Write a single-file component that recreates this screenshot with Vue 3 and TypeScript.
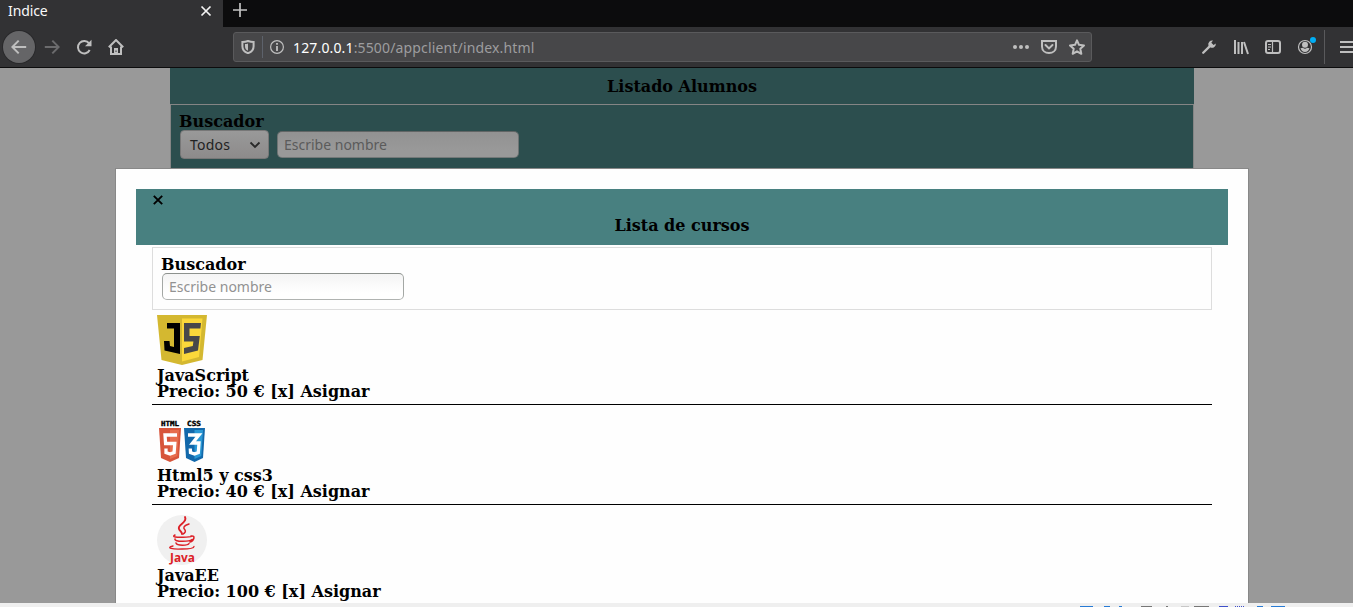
<script setup lang="ts">
import { ref } from 'vue'

interface Course {
  name: string
  price: number
  logo: 'js' | 'html' | 'java'
}

const courses: Course[] = [
  { name: 'JavaScript', price: 50, logo: 'js' },
  { name: 'Html5 y css3', price: 40, logo: 'html' },
  { name: 'JavaEE', price: 100, logo: 'java' },
]
const studentQuery = ref('')
const courseQuery = ref('')
</script>

<template>
  <div class="window">
    <header class="tabs">
      <div class="tab">
        <span class="tab-title">Indice</span>
        <svg class="tab-close" width="12" height="12" viewBox="0 0 12 12"><path d="M1.5 1.5 10.5 10.5M10.5 1.5 1.5 10.5" stroke="#f4f4f4" stroke-width="1.7" /></svg>
      </div>
      <svg class="tab-new" width="14" height="14" viewBox="0 0 14 14"><path d="M7 0V14M0 7H14" stroke="#c4c4c4" stroke-width="1.7" /></svg>
    </header>

    <nav class="toolbar">
      <span class="back">
        <svg width="16" height="16" viewBox="0 0 16 16"><path d="M15.2 8H1.4M7.7 1.6 1.3 8l6.4 6.4" class="line" /></svg>
      </span>
      <svg class="forward" width="16" height="16" viewBox="0 0 16 16"><path d="M.8 8h13.8M8.3 1.6 14.7 8l-6.4 6.4" class="line dim" /></svg>
      <svg class="reload" width="16" height="16" viewBox="0 0 16 16"><path d="M13.1 4.4A6.2 6.2 0 1 0 13.7 11" class="line" /><path d="M15.5.8v6.5H9z" class="fill" /></svg>
      <svg class="home" width="16" height="16" viewBox="0 0 16 16"><path d="M.8 8.2 8 1l7.2 7.2M3 7.5V15h10V7.5" class="line" /><path d="M6 9h4v6H6z" class="fill" /><path d="M7.5 11.5h1V13h-1z" fill="#323234" /></svg>

      <div class="address">
        <svg class="shield" width="14" height="14" viewBox="0 0 14 14"><path d="M7 1C4.7 1.8 3 2 1.4 2v4.2C1.4 10 3.4 12 7 13.2 10.6 12 12.6 10 12.6 6.2V2C11 2 9.300 1.800 7 1z" class="line" /><path d="M7 3.4v7.4C4.9 9.8 4 8.500 4 6.2V4c1.100 0 2.100-.2 3-.6z" class="fill" /></svg>
        <span class="divider" />
        <svg class="info" width="14" height="14" viewBox="0 0 14 14"><circle cx="7" cy="7" r="6.4" class="line thin" /><path d="M6.100 3h1.800v1.700H6.100zM6.100 6h1.800v5H6.100z" class="fill" /></svg>
        <span class="url"><b>127.0.0.1</b>:5500/appclient/index.html</span>
        <svg class="dots" width="16" height="16" viewBox="0 0 16 16"><circle cx="2" cy="8" r="2" class="fill" /><circle cx="8" cy="8" r="2" class="fill" /><circle cx="14" cy="8" r="2" class="fill" /></svg>
        <svg class="pocket" width="16" height="16" viewBox="0 0 16 16"><path d="M1 2h14v5.500C15 11.700 11.800 14 8 14S1 11.700 1 7.500z" class="line" /><path d="m4.500 6 3.500 3.400L11.500 6" class="line" stroke-linecap="round" /></svg>
        <svg class="star" width="16" height="16" viewBox="0 0 16 16"><path d="m8 1.300 2 4.500 5 .6-3.700 3.400 1 5L8 12.300l-4.300 2.500 1-5L1 6.400l5-.6z" class="line" stroke-linejoin="round" /></svg>
      </div>

      <svg class="wrench" width="16" height="16" viewBox="0 0 16 16"><path d="m2.200 13.800 7.200-7.200" stroke="#bfbfbf" stroke-width="2.300" stroke-linecap="round" /><path d="M14.800 4.500 12.600 6 10.300 3.800 12 1.500A3.900 3.900 0 0 0 7.400 6.400l2.200 2.200A3.900 3.900 0 0 0 14.800 4.500z" class="fill" /></svg>
      <svg class="library" width="16" height="16" viewBox="0 0 16 16"><path d="M2 1v14M5.500 3v12M9 3v12M11 3l4 12" class="line" /></svg>
      <svg class="sidebar" width="16" height="16" viewBox="0 0 16 16"><rect x="1" y="2" width="14" height="12" rx="2" class="line" /><path d="M7.500 2v12" class="line thin" /><path d="M3 5.500h3M3 8h3M3 10.500h2" class="line thin" /></svg>
      <svg class="account" width="20" height="20" viewBox="0 0 20 20"><circle cx="8" cy="12" r="6.500" class="line thin" /><circle cx="8" cy="9.700" r="3" class="fill" /><path d="M3.500 13.300 6 12.700c1 1.300 3 1.300 4 0l2.500.6C11.800 15.600 10.200 17 8 17s-3.800-1.400-4.500-3.700z" class="fill" /><circle cx="16" cy="5" r="3" fill="#00aef5" /></svg>
      <span class="menu-divider" />
      <svg class="menu" width="16" height="16" viewBox="0 0 16 16"><path d="M1 3h14M1 8h14M1 13h14" class="line" /></svg>
    </nav>

    <main class="page">
      <section class="students">
        <h1>Listado Alumnos</h1>
        <div class="student-search">
          <strong>Buscador</strong>
          <div class="controls">
            <button class="select" type="button">
              <span>Todos</span>
              <svg width="12" height="8" viewBox="0 0 12 8"><path d="m1.500 1.500 4.500 4.500 4.500-4.500" fill="none" stroke="#292929" stroke-width="1.800" /></svg>
            </button>
            <input v-model="studentQuery" class="field muted" placeholder="Escribe nombre" />
          </div>
        </div>
      </section>

      <section class="modal">
        <div class="modal-head">
          <svg class="modal-close" width="10" height="10" viewBox="0 0 10 10"><path d="m.8.8 8.400 8.400M9.200.8.8 9.200" stroke="#000" stroke-width="1.900" /></svg>
          <h2>Lista de cursos</h2>
        </div>
        <div class="modal-body">
          <div class="course-search">
            <strong>Buscador</strong>
            <input v-model="courseQuery" class="field" placeholder="Escribe nombre" />
          </div>
          <article v-for="course in courses" :key="course.name" class="course">
            <svg v-if="course.logo === 'js'" class="logo" viewBox="0 0 50 50">
              <path d="M0 0h50l-4.500 45L25 50 4.500 45z" fill="#d4b830" />
              <path d="M25 3.500h20.500L42 42l-17 4.500z" fill="#fbd83a" />
              <path d="M10 8h13v31L7.500 35.500 7 26h5.500l.5 5 4 1V13.500h-7z" fill="#000" />
              <path d="M27 8h17l-.6 5.500H32.500v7.500h10.300L41 35.500 27 39v-6l8.800-2 .6-4.500H27z" fill="#48484a" />
            </svg>
            <svg v-else-if="course.logo === 'html'" class="logo" viewBox="0 0 50 50">
              <text x="4" y="11" class="badge-text" textLength="18" lengthAdjust="spacingAndGlyphs">HTML</text>
              <text x="30" y="11" class="badge-text" textLength="14" lengthAdjust="spacingAndGlyphs">CSS</text>
              <path d="M2 13h22l-2 30-9 4-9-4z" fill="#d7553b" />
              <path d="M13 15h9l-1.700 26L13 44z" fill="#e76d4d" />
              <path d="M20 20H8l.6 8.500h9.200l-.7 9-4 1.500L9 37.500v-4" fill="none" stroke="#fff" stroke-width="3.300" />
              <path d="M27 13h21l-2 30-8.500 4-8.500-4z" fill="#1268aa" />
              <path d="M37.500 15H46l-1.700 26-6.800 3z" fill="#2998d5" />
              <path d="M31 20h11l-6.500 8H42l-.7 9.500-3.800 1.500-4-1.500-.2-4" fill="none" stroke="#fff" stroke-width="3.300" />
            </svg>
            <svg v-else class="logo" viewBox="0 0 50 50">
              <circle cx="25" cy="25" r="25" fill="#f0f0f0" />
              <g fill="none" stroke="#dc2027" stroke-linecap="round">
                <path d="M28 2c3 6-8 7-6 12 .7 2 3 3 3 5" stroke-width="1.900" />
                <path d="M32 9c-6 2-6 4-4 6 1 1.500 0 3-2 4" stroke-width="1.500" />
                <path d="M18 20c-4 2 2 2.500 8 2.300 5 0 8-.5 9-1.300M18 24c-1 3 14 3 17 .5M19 28c1 3 12 2.500 13 .5M34 21c5-1 3 5-1 6" stroke-width="1.500" />
                <path d="M16 31c-8 2 0 3.500 9 3 7 0 12-1 12-2.500" stroke-width="1.300" />
              </g>
              <text x="13" y="46.500" class="java-text" textLength="25" lengthAdjust="spacingAndGlyphs">Java</text>
            </svg>
            <div class="course-name">{{ course.name }}</div>
            <div class="course-price">Precio: {{ course.price }} € [x] Asignar</div>
          </article>
        </div>
      </section>
    </main>
    <footer class="dock">
      <svg width="220" height="2" viewBox="0 0 220 2">
        <path d="M0 1h13M24 1h6M39 1h3M177 1h6M191 1h14" stroke="#287bd5" stroke-width="2" />
        <path d="M61 1h11M86 1h2M114 1h15" stroke="#777" stroke-width="2" />
        <path d="M101 1h8" stroke="#c7c7c7" stroke-width="2" />
        <path d="M139 1h9" stroke="#3f50c9" stroke-width="2" />
        <path d="M155 1h9" stroke="#3f50c9" stroke-width="2" stroke-dasharray="1 1" />
      </svg>
    </footer>
  </div>
</template>

<style>
html, body { margin: 0; overflow: hidden; }
</style>

<style scoped>
* { box-sizing: border-box; }
.window { width: 1353px; height: 607px; overflow: hidden; display: flex; flex-direction: column; background: #999; color: #000; font: 700 16px/16px "DejaVu Serif", serif; }
svg { display: block; flex: none; }
.line { fill: none; stroke: #bfbfbf; stroke-width: 2; }
.line.thin { stroke-width: 1.200; }
.line.dim { stroke: #6b6b6d; }
.fill { fill: #bfbfbf; }
.tabs { height: 27px; flex: none; background: #0c0c0d; display: flex; }
.tab { width: 223px; background: #323234; display: flex; justify-content: space-between; padding: 5px 11px 0 8px; }
.tab-title { font: 400 14px/13px "Noto Sans", sans-serif; letter-spacing: -.1px; margin-top: -1px; color: #f9f9fa; }
.tab-new { margin: 3px 0 0 10px; }
.toolbar { height: 41px; flex: none; background: #323234; border-bottom: 1px solid #0c0c0d; display: flex; align-items: center; padding-left: 3px; }
.back { width: 32px; height: 32px; flex: none; border-radius: 50%; background: #656567; box-shadow: 0 0 0 1px #29292b; display: grid; place-items: center; }
.forward { margin-left: 9px; }
.reload, .home { margin-left: 16px; }
.address { width: 859px; height: 30px; flex: none; margin-left: 109px; border: 1px solid #5a5a5c; border-radius: 3px; background: #474749; display: flex; align-items: center; padding: 0 6px 0 7px; }
.divider { width: 1px; height: 22px; margin: 0 7px; background: #5d626b; }
.url { font: 400 14px/20px "Noto Sans", sans-serif; letter-spacing: 0.150px; margin: 1px 0 0 9px; color: #9d9d9f; white-space: nowrap; }
.url b { font-weight: 400; color: #fff; }
.dots { margin-left: auto; }
.pocket, .star { margin-left: 12px; }
.wrench { margin-left: 109px; }
.library, .sidebar { margin-left: 16px; }
.account { margin: -4px 0 0 16px; }
.menu-divider { height: 34px; flex: none; margin-left: 7px; border-left: 1px solid #5a5a5c; }
.menu { margin-left: 14px; }
.page { height: 535px; flex: none; position: relative; overflow: hidden; background: #999; }
.students { width: 1024px; margin-left: 170px; background: #2c4e4e; }
h1, h2, strong { margin: 0; font-size: 16px; font-weight: 700; line-height: 16px; }
h1 { height: 36px; padding-top: 11px; text-align: center; }
.student-search { height: 120px; border: 1px solid #858585; padding: 9px 8px 8px; }
strong { display: block; }
.controls { display: flex; padding: 0 0 0 1px; }
.select { width: 89px; height: 29px; border: 1px solid #777; border-radius: 4px; background: linear-gradient(#999, #8d8b8b); color: #222; display: flex; align-items: center; justify-content: space-between; padding: 1px 7px 0 9px; font: 400 14px/20px "Noto Sans", sans-serif; letter-spacing: .2px; }
.field { display: block; width: 242px; height: 27px; margin: 0; padding: 0 6px 1px; outline: none; border: 1px solid #8d8f8d; border-color: #8c918d #a4a8a5 #b0b3b1; border-radius: 5px; background: linear-gradient(#f4f4f4, #fff 75%); color: #222; font: 400 14px/20px "Noto Sans", sans-serif; }
.field::placeholder { color: #929292; opacity: 1; }
.field.muted { margin: 1px 0 0 8px; border-color: #616565 #6e7474 #747979; background: linear-gradient(#929292, #999 75%); }
.field.muted::placeholder { color: #5b5b5b; }
.modal { position: absolute; top: 100px; left: 115px; width: 1134px; height: 536px; padding: 20px; border: 1px solid #888; background: #fefefe; }
.modal-head { height: 56px; padding: 6px 16px 0; background: #488080; }
.modal-close { margin: 0 0 6px 1px; }
h2 { text-align: center; padding-top: 7px; }
.modal-body { padding: 2px 16px 0; }
.course-search { height: 63px; border: 1px solid #ddd; padding: 9px 8px 8px; }
.course-search .field { margin: 0 0 0 1px; }
.course { height: 95px; border-bottom: 1px solid #000; padding: 5px 5px 0; white-space: nowrap; }
.course + .course { height: 100px; padding-top: 10px; }
.logo { width: 50px; height: 50px; margin-bottom: 3px; }
.badge-text { font: 700 7px "DejaVu Sans Mono", monospace; stroke: #000; stroke-width: .4px; }
.java-text { font: 700 13px "Open Sans", sans-serif; fill: #dc2027; }
.dock { height: 4px; flex: none; background: #efefef; padding: 3px 0 0 1080px; overflow: hidden; }
</style>
